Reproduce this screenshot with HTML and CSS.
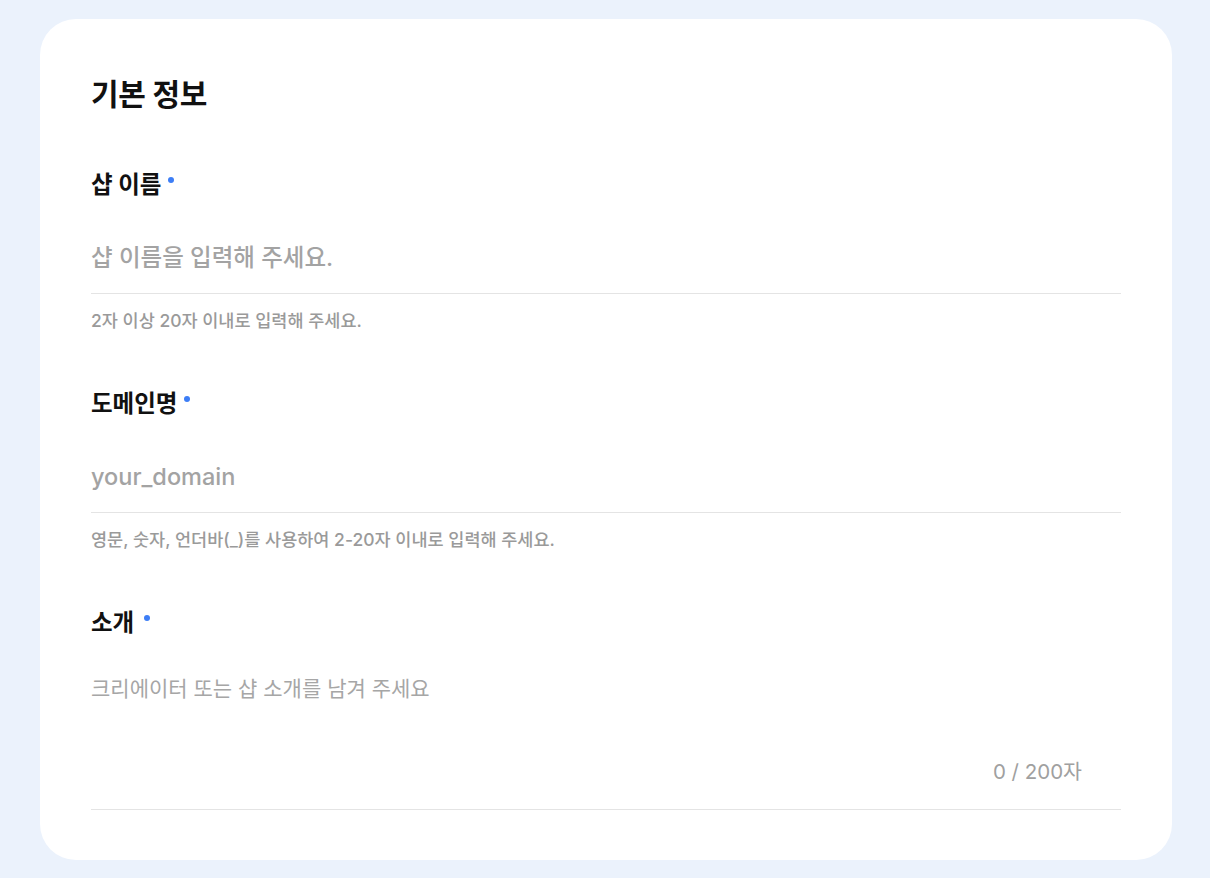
FILE: index.html
```html
<!DOCTYPE html>
<html lang="ko">
<head>
<meta charset="utf-8">
<title>기본 정보</title>
<link rel="stylesheet" href="styles.css">
</head>
<body>
<section class="card">
  <h2 class="card-title">기본 정보</h2>

  <div class="field field-first">
    <label class="label" for="shop">샵 이름<span class="dot"></span></label>
    <input class="input" id="shop" type="text" placeholder="샵 이름을 입력해 주세요.">
    <p class="help">2자 이상 20자 이내로 입력해 주세요.</p>
  </div>

  <div class="field">
    <label class="label" for="domain">도메인명<span class="dot"></span></label>
    <input class="input" id="domain" type="text" placeholder="your_domain">
    <p class="help">영문, 숫자, 언더바(_)를 사용하여 2-20자 이내로 입력해 주세요.</p>
  </div>

  <div class="field">
    <label class="label" for="intro">소개 <span class="dot dot-wide"></span></label>
    <div class="textarea-wrap">
      <textarea class="textarea" id="intro" placeholder="크리에이터 또는 샵 소개를 남겨 주세요"></textarea>
      <div class="counter">0 / 200자</div>
    </div>
  </div>
</section>
</body>
</html>
```

FILE: styles.css
```css
* { box-sizing: border-box; }

html, body {
  margin: 0;
  padding: 0;
}

body {
  background: #ebf2fc;
  font-family: "Inter", "Noto Sans CJK KR", "Noto Sans", sans-serif;
  color: #111;
  padding: 19px 38px 18px 40px;
}

.card {
  background: #ffffff;
  border-radius: 36px;
  padding: 57px 51px 50px 51px;
}

.card-title {
  margin: 0;
  font-size: 30px;
  line-height: 36px;
  font-weight: 700;
  color: #111;
  letter-spacing: -0.01em;
}

.field {
  margin-top: 57px;
}

.field-first {
  margin-top: 58px;
}

.label {
  display: flex;
  align-items: flex-start;
  font-size: 23.5px;
  line-height: 30px;
  font-weight: 700;
  color: #111;
  white-space: pre;
}

.dot {
  width: 6px;
  height: 6px;
  border-radius: 50%;
  background: #3d7ef6;
  margin-top: 7px;
  margin-left: 7px;
  flex: none;
}

.dot-wide {
  margin-left: 4px;
}

.input {
  display: block;
  width: 100%;
  margin-top: 21px;
  height: 73px;
  padding: 0;
  border: none;
  border-bottom: 1px solid #e4e4e4;
  outline: none;
  background: transparent;
  font-family: inherit;
  font-size: 23.5px;
  font-weight: 500;
  color: #111;
}

.input::placeholder {
  color: #a3a3a3;
  opacity: 1;
}

.help {
  margin: 16px 0 0;
  font-size: 17.5px;
  line-height: 22px;
  font-weight: 500;
  color: #9a9a9a;
}

.textarea-wrap {
  margin-top: 21px;
  border-bottom: 1px solid #e4e4e4;
  padding-bottom: 23px;
}

.textarea {
  display: block;
  width: 100%;
  height: 99px;
  padding: 16px 0 0;
  border: none;
  outline: none;
  resize: none;
  background: transparent;
  font-family: inherit;
  font-size: 21px;
  line-height: 28px;
  font-weight: 400;
  color: #111;
}

.textarea::placeholder {
  color: #a6a6a6;
  opacity: 1;
}

.counter {
  text-align: right;
  padding-right: 39px;
  font-size: 20.5px;
  line-height: 28px;
  color: #a0a0a0;
}
```
